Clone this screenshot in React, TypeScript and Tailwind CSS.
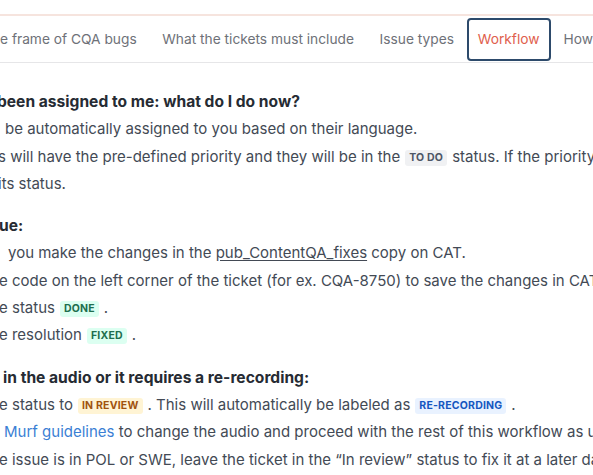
import React from "react";

const Badge = ({ children, cls }: { children: React.ReactNode; cls: string }) => (
  <span className={`mx-[5px] inline-block rounded-[3px] px-[4px] text-[10.5px] font-bold uppercase leading-[16px] tracking-[0.2px] align-[1px] ${cls}`}>
    {children}
  </span>
);

export default function App() {
  return (
    <div className="h-[475px] w-[593px] overflow-hidden bg-white text-[#434a55]" style={{ fontFamily: "Inter, 'Noto Sans', sans-serif" }}>
      <div className="h-[14px]" />
      <div className="h-[2px] bg-[#f6e4de]" />
      <div className="flex h-[47px] items-end border-b border-[#e6e6e8] pb-[1px] whitespace-nowrap text-[13.75px] text-[#6e7178]">
        <div className="-ml-[12.8px] flex h-[43px] items-center px-[12.8px]">e frame of CQA bugs</div>
        <div className="flex h-[43px] items-center px-[12.8px]">What the tickets must include</div>
        <div className="flex h-[43px] items-center px-[12.8px]">Issue types</div>
        <div className="flex h-[43px] items-center rounded-[4px] border-2 border-[#2d4a6b] px-[9px] text-[#e0604d]">Workflow</div>
        <div className="flex h-[43px] items-center px-[13px]">How</div>
      </div>

      <div className="whitespace-nowrap text-[15px] leading-[27.3px]">
        <div className="mt-[25px] -ml-[3px] text-[15.6px] font-bold text-[#262b33]">been assigned to me: what do I do now?</div>
        <div className="ml-[5px]">be automatically assigned to you based on their language.</div>
        <div className="-ml-[2px]">s will have the pre-defined priority and they will be in the<Badge cls="bg-[#f0f1f3] text-[#4d5666]">To do</Badge>status. If the priority is wrong, change</div>
        <div className="-ml-[2px]">its status.</div>

        <div className="mt-[15px] -ml-[1px] text-[15.6px] font-bold text-[#262b33]">ue:</div>
        <div className="ml-[8px]">you make the changes in the <span className="underline underline-offset-2">pub_ContentQA_fixes</span> copy on CAT.</div>
        <div className="-ml-[1px]">e code on the left corner of the ticket (for ex. CQA-8750) to save the changes in CAT.</div>
        <div className="-ml-[1px]">e status<Badge cls="bg-[#dcfff1] text-[#216e4e]">Done</Badge>.</div>
        <div className="-ml-[1px]">e resolution<Badge cls="bg-[#dcfff1] text-[#216e4e]">Fixed</Badge>.</div>

        <div className="mt-[15px] ml-[3px] text-[15.6px] font-bold text-[#262b33]">in the audio or it requires a re-recording:</div>
        <div className="-ml-[1px]">e status to<Badge cls="bg-[#fff4d4] text-[#a0530e]">In review</Badge>. This will automatically be labeled as<Badge cls="bg-[#e9f2ff] text-[#1557c0]">Re-recording</Badge>.</div>
        <div className="ml-[4px]"><span className="text-[#3b7fd4]">Murf guidelines</span> to change the audio and proceed with the rest of this workflow as usual.</div>
        <div className="-ml-[1px]">e issue is in POL or SWE, leave the ticket in the “In review” status to fix it at a later date.</div>
      </div>
    </div>
  );
}
